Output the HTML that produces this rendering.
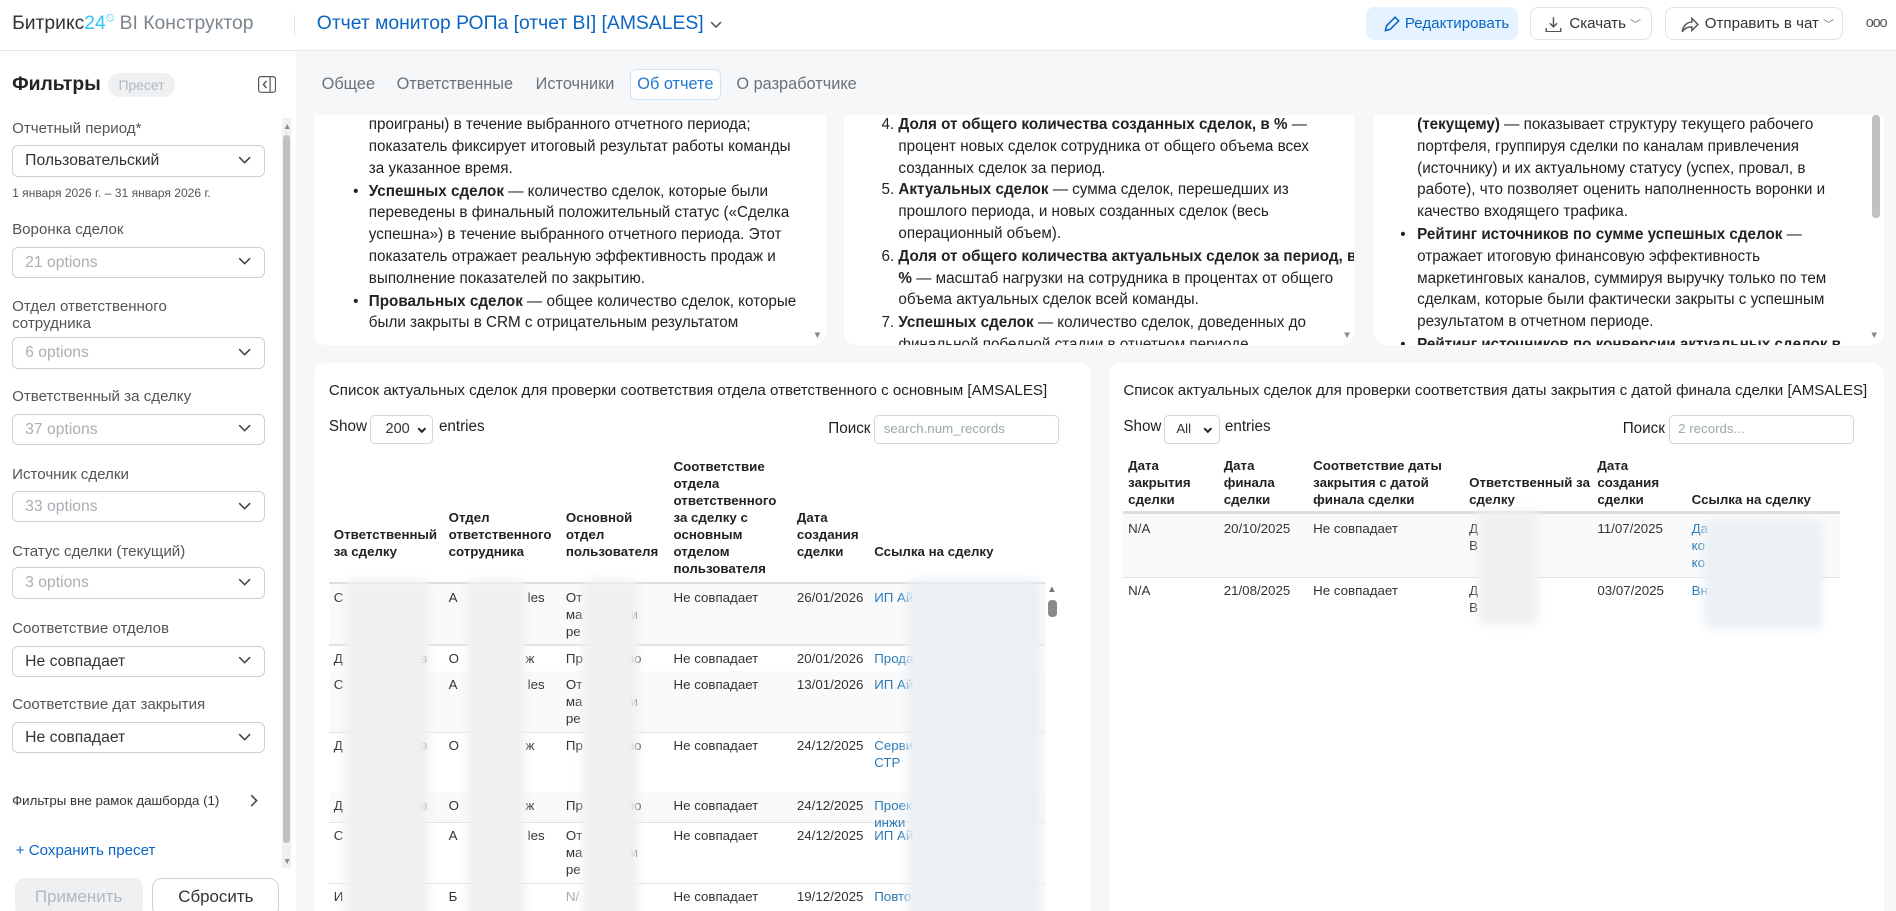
<!DOCTYPE html>
<html><head><meta charset="utf-8"><style>
html,body{margin:0;padding:0;overflow:hidden;background:#f5f7f8}
#r{position:relative;width:1568px;height:753px;zoom:1.2092;font-family:"Liberation Sans",sans-serif;color:#333;font-size:13px;overflow:hidden;background:#f5f7f8}
.a{position:absolute;white-space:nowrap}
.hdr{position:absolute;left:0;top:0;width:1568px;height:41px;background:#fff;border-bottom:1px solid #e4e7ea}
.btn{position:absolute;top:6px;height:27px;border:1px solid #dfe3e6;border-radius:7px;background:#fff;font-size:12.5px;color:#333;line-height:27px;box-sizing:border-box}
.side{position:absolute;left:0;top:42px;width:245px;height:711px;background:#fff}
.lbl{position:absolute;left:10px;font-size:12.5px;color:#555}
.sel{position:absolute;left:10px;width:209px;height:26px;border:1px solid #ccd0d4;border-radius:5px;box-sizing:border-box;font-size:13px;line-height:24px;padding-left:10px;color:#333}
.sel.ph{color:#a9afb4}
.sel svg{position:absolute;right:10px;top:8px}
.card{position:absolute;background:#fff;border-radius:10px;overflow:hidden}
.t{position:absolute;white-space:nowrap;font-size:12.6px;color:#222}
.bl{position:absolute;filter:blur(4px);background:#eef0f2;border-radius:6px}
.h{position:absolute;font-size:11px;font-weight:bold;color:#222;line-height:14px;white-space:nowrap}
.c{position:absolute;font-size:11px;color:#333;line-height:14px;white-space:nowrap}
.lk{color:#2a7ab8}
.rl{position:absolute;height:1px;background:#e2e2e2}
</style></head><body><div id="r">

<div class="hdr">
 <div class="a" style="left:10px;top:10px;font-size:16px;color:#333">Битрикс<span style="color:#2fc6f6">24</span><sup style="font-size:9px;color:#2fc6f6">⏲</sup> <span style="color:#7c858c">BI Конструктор</span></div>
 <div class="a" style="left:243px;top:12px;width:1px;height:18px;background:#e4e7ea"></div>
 <div class="a" style="left:262px;top:10px;font-size:16px;color:#0b66c3">Отчет монитор РОПа [отчет BI] [AMSALES]</div>
 <svg class="a" style="left:587px;top:17px" width="10" height="7"><polyline points="1,1 5,5 9,1" fill="none" stroke="#555" stroke-width="1.3"/></svg>
 <div class="btn" style="left:1130px;width:125px;background:#e5f2ff;border-color:#e5f2ff;color:#0b66c3;padding-left:31px"><svg class="a" style="left:13px;top:6px" width="14" height="14"><path d="M2 12 L3 8 L10 1 L13 4 L6 11 Z" fill="none" stroke="#0b66c3" stroke-width="1.3"/></svg>Редактировать</div>
 <div class="btn" style="left:1265px;width:101px;padding-left:32px"><svg class="a" style="left:12px;top:6px" width="14" height="14"><path d="M7 1 V9 M4 6 L7 9 L10 6 M1 10 V13 H13 V10" fill="none" stroke="#555" stroke-width="1.2"/></svg>Скачать <span style="font-size:9px;color:#777">﹀</span></div>
 <div class="btn" style="left:1377px;width:147px;padding-left:32px"><svg class="a" style="left:12px;top:6px" width="15" height="14"><path d="M1 13 C2 7 6 5 9 5 V2 L14 7 L9 12 V9 C6 9 3 10 1 13 Z" fill="none" stroke="#555" stroke-width="1.2"/></svg>Отправить в чат <span style="font-size:9px;color:#777">﹀</span></div>
 <div class="a" style="left:1543px;top:12px;font-size:12px;color:#555;letter-spacing:-1px">ooo</div>
</div>

<div class="side">
 <div class="a" style="left:10px;top:18px;font-size:16px;font-weight:bold;color:#222">Фильтры</div>
 <div class="a" style="left:89px;top:18px;width:56px;height:20px;border-radius:10px;background:#eef0f2;color:#b3b9be;font-size:11.5px;text-align:center;line-height:20px">Пресет</div>
 <svg class="a" style="left:213px;top:21px" width="15" height="14"><rect x="0.5" y="0.5" width="14" height="13" rx="2" fill="none" stroke="#555"/><line x1="10" y1="1" x2="10" y2="13" stroke="#555"/><polyline points="7,4 4.5,7 7,10" fill="none" stroke="#555" stroke-width="1.2"/></svg>
 <div class="lbl" style="top:57px">Отчетный период*</div>
 <div class="sel" style="top:78px">Пользовательский<svg width="11" height="7"><polyline points="1,1 5.5,5.5 10,1" fill="none" stroke="#444" stroke-width="1.3"/></svg></div>
 <div class="a" style="left:10px;top:112px;font-size:10px;color:#555">1 января 2026 г. – 31 января 2026 г.</div>
 <div class="lbl" style="top:141px">Воронка сделок</div>
 <div class="sel ph" style="top:162px">21 options<svg width="11" height="7"><polyline points="1,1 5.5,5.5 10,1" fill="none" stroke="#444" stroke-width="1.3"/></svg></div>
 <div class="lbl" style="top:205px;line-height:14px">Отдел ответственного<br>сотрудника</div>
 <div class="sel ph" style="top:237px">6 options<svg width="11" height="7"><polyline points="1,1 5.5,5.5 10,1" fill="none" stroke="#444" stroke-width="1.3"/></svg></div>
 <div class="lbl" style="top:279px">Ответственный за сделку</div>
 <div class="sel ph" style="top:300px">37 options<svg width="11" height="7"><polyline points="1,1 5.5,5.5 10,1" fill="none" stroke="#444" stroke-width="1.3"/></svg></div>
 <div class="lbl" style="top:343px">Источник сделки</div>
 <div class="sel ph" style="top:364px">33 options<svg width="11" height="7"><polyline points="1,1 5.5,5.5 10,1" fill="none" stroke="#444" stroke-width="1.3"/></svg></div>
 <div class="lbl" style="top:407px">Статус сделки (текущий)</div>
 <div class="sel ph" style="top:427px">3 options<svg width="11" height="7"><polyline points="1,1 5.5,5.5 10,1" fill="none" stroke="#444" stroke-width="1.3"/></svg></div>
 <div class="lbl" style="top:471px">Соответствие отделов</div>
 <div class="sel" style="top:492px">Не совпадает<svg width="11" height="7"><polyline points="1,1 5.5,5.5 10,1" fill="none" stroke="#444" stroke-width="1.3"/></svg></div>
 <div class="lbl" style="top:534px">Соответствие дат закрытия</div>
 <div class="sel" style="top:555px">Не совпадает<svg width="11" height="7"><polyline points="1,1 5.5,5.5 10,1" fill="none" stroke="#444" stroke-width="1.3"/></svg></div>
 <div class="a" style="left:10px;top:614px;font-size:11px;color:#333">Фильтры вне рамок дашборда (1)</div>
 <svg class="a" style="left:207px;top:615px" width="7" height="11"><polyline points="1,1 5.5,5.5 1,10" fill="none" stroke="#444" stroke-width="1.3"/></svg>
 <div class="a" style="left:13px;top:654px;font-size:12.5px;color:#0b66c3">+ Сохранить пресет</div>
 <div class="a" style="left:12px;top:684px;width:106px;height:32px;border-radius:8px;background:#eef0f2;color:#b3b9be;font-size:14px;text-align:center;line-height:32px">Применить</div>
 <div class="a" style="left:126px;top:684px;width:105px;height:32px;border-radius:8px;border:1px solid #ccd0d4;box-sizing:border-box;color:#333;font-size:14px;text-align:center;line-height:30px">Сбросить</div>
 <div class="a" style="left:233px;top:56px;width:8px;height:620px;background:#f1f1f1"></div>
 <div class="a" style="left:234px;top:70px;width:6px;height:585px;background:#c1c1c1;border-radius:3px"></div>
 <div class="a" style="left:234px;top:58px;font-size:7px;color:#888">▲</div>
 <div class="a" style="left:234px;top:666px;font-size:7px;color:#888">▼</div>
</div>

<!-- tabs -->
<div class="a" style="left:266px;top:62px;font-size:13.5px;color:#6b7379">Общее</div>
<div class="a" style="left:328px;top:62px;font-size:13.5px;color:#6b7379">Ответственные</div>
<div class="a" style="left:443px;top:62px;font-size:13.5px;color:#6b7379">Источники</div>
<div class="a" style="left:521px;top:57px;width:75px;height:26px;border:1px solid #cfe3f7;border-radius:5px;background:#fff;box-sizing:border-box;font-size:13.5px;color:#1f77d0;text-align:center;line-height:24px">Об отчете</div>
<div class="a" style="left:609px;top:62px;font-size:13.5px;color:#6b7379">О разработчике</div>

<!-- top cards -->
<div class="card" style="left:260px;top:95px;width:423px;height:190px;border-radius:0 0 10px 10px">
 <div class="t" style="left:45px;top:-17px">перешли в финальный статус (успешно реализованы или</div>
 <div class="t" style="left:45px;top:1px">проиграны) в течение выбранного отчетного периода;</div>
 <div class="t" style="left:45px;top:19px">показатель фиксирует итоговый результат работы команды</div>
 <div class="t" style="left:45px;top:37px">за указанное время.</div>
 <div class="t" style="left:32px;top:56px">•</div>
 <div class="t" style="left:45px;top:56px"><b>Успешных сделок</b> — количество сделок, которые были</div>
 <div class="t" style="left:45px;top:74px">переведены в финальный положительный статус («Сделка</div>
 <div class="t" style="left:45px;top:92px">успешна») в течение выбранного отчетного периода. Этот</div>
 <div class="t" style="left:45px;top:110px">показатель отражает реальную эффективность продаж и</div>
 <div class="t" style="left:45px;top:128px">выполнение показателей по закрытию.</div>
 <div class="t" style="left:32px;top:147px">•</div>
 <div class="t" style="left:45px;top:147px"><b>Провальных сделок</b> — общее количество сделок, которые</div>
 <div class="t" style="left:45px;top:165px">были закрыты в CRM с отрицательным результатом</div>
 <div class="a" style="left:412px;top:178px;font-size:8px;color:#888">▼</div>
</div>
<div class="card" style="left:698px;top:95px;width:422px;height:190px;border-radius:0 0 10px 10px">
 <div class="t" style="left:31px;top:1px">4. <b>Доля от общего количества созданных сделок, в %</b> —</div>
 <div class="t" style="left:45px;top:19px">процент новых сделок сотрудника от общего объема всех</div>
 <div class="t" style="left:45px;top:37px">созданных сделок за период.</div>
 <div class="t" style="left:31px;top:55px">5. <b>Актуальных сделок</b> — сумма сделок, перешедших из</div>
 <div class="t" style="left:45px;top:73px">прошлого периода, и новых созданных сделок (весь</div>
 <div class="t" style="left:45px;top:91px">операционный объем).</div>
 <div class="t" style="left:31px;top:110px">6. <b>Доля от общего количества актуальных сделок за период, в</b></div>
 <div class="t" style="left:45px;top:128px"><b>%</b> — масштаб нагрузки на сотрудника в процентах от общего</div>
 <div class="t" style="left:45px;top:146px">объема актуальных сделок всей команды.</div>
 <div class="t" style="left:31px;top:165px">7. <b>Успешных сделок</b> — количество сделок, доведенных до</div>
 <div class="t" style="left:45px;top:183px">финальной победной стадии в отчетном периоде</div>
 <div class="a" style="left:412px;top:178px;font-size:8px;color:#888">▼</div>
</div>
<div class="card" style="left:1136px;top:95px;width:422px;height:190px;border-radius:0 0 10px 10px">
 <div class="t" style="left:36px;top:1px"><b>(текущему)</b> — показывает структуру текущего рабочего</div>
 <div class="t" style="left:36px;top:19px">портфеля, группируя сделки по каналам привлечения</div>
 <div class="t" style="left:36px;top:37px">(источнику) и их актуальному статусу (успех, провал, в</div>
 <div class="t" style="left:36px;top:55px">работе), что позволяет оценить наполненность воронки и</div>
 <div class="t" style="left:36px;top:73px">качество входящего трафика.</div>
 <div class="t" style="left:22px;top:92px">•</div>
 <div class="t" style="left:36px;top:92px"><b>Рейтинг источников по сумме успешных сделок</b> —</div>
 <div class="t" style="left:36px;top:110px">отражает итоговую финансовую эффективность</div>
 <div class="t" style="left:36px;top:128px">маркетинговых каналов, суммируя выручку только по тем</div>
 <div class="t" style="left:36px;top:146px">сделкам, которые были фактически закрыты с успешным</div>
 <div class="t" style="left:36px;top:164px">результатом в отчетном периоде.</div>
 <div class="t" style="left:22px;top:183px">•</div>
 <div class="t" style="left:36px;top:183px"><b>Рейтинг источников по конверсии актуальных сделок в</b></div>
 <div class="a" style="left:412px;top:0px;width:7px;height:85px;background:#c1c1c1;border-radius:3px"></div>
 <div class="a" style="left:410px;top:178px;font-size:8px;color:#888">▼</div>
</div>

<!-- bottom left card -->
<div class="card" style="left:260px;top:300px;width:642px;height:470px">
 <div class="t" style="left:12px;top:16px;font-size:12.5px">Список актуальных сделок для проверки соответствия отдела ответственного с основным [AMSALES]</div>
 <div class="t" style="left:12px;top:46px">Show</div>
 <div class="a" style="left:46px;top:43px;width:52px;height:24px;border:1px solid #d6d6d6;border-radius:4px;box-sizing:border-box;font-size:12px;line-height:22px;padding-left:12px">200<svg class="a" style="left:38px;top:9px" width="8" height="6"><polyline points="1,1 4,4 7,1" fill="none" stroke="#222" stroke-width="1.6"/></svg></div>
 <div class="t" style="left:103px;top:46px">entries</div>
 <div class="t" style="left:425px;top:47px">Поиск</div>
 <div class="a" style="left:463px;top:43px;width:153px;height:24px;border:1px solid #d6d6d6;border-radius:4px;box-sizing:border-box;font-size:11px;line-height:22px;padding-left:7px;color:#9aa">search.num_records</div>
 <div class="h" style="left:16px;top:136px">Ответственный<br>за сделку</div>
 <div class="h" style="left:111px;top:122px">Отдел<br>ответственного<br>сотрудника</div>
 <div class="h" style="left:208px;top:122px">Основной<br>отдел<br>пользователя</div>
 <div class="h" style="left:297px;top:80px">Соответствие<br>отдела<br>ответственного<br>за сделку с<br>основным<br>отделом<br>пользователя</div>
 <div class="h" style="left:399px;top:122px">Дата<br>создания<br>сделки</div>
 <div class="h" style="left:463px;top:150px">Ссылка на сделку</div>
 <div class="a" style="left:12px;top:181px;width:592px;height:2px;background:#ddd"></div>
 <div class="a" style="left:12px;top:183px;width:592px;height:50px;background:#fafafa"></div>
 <div class="rl" style="left:12px;top:233px;width:592px"></div>
 <div class="rl" style="left:12px;top:255px;width:592px"></div>
 <div class="a" style="left:12px;top:255px;width:592px;height:50px;background:#fafafa"></div>
 <div class="rl" style="left:12px;top:305px;width:592px"></div>
 <div class="rl" style="left:12px;top:355px;width:592px"></div>
 <div class="a" style="left:12px;top:355px;width:592px;height:25px;background:#fafafa"></div>
 <div class="rl" style="left:12px;top:380px;width:592px"></div>
 <div class="rl" style="left:12px;top:430px;width:592px"></div>
 <div class="c" style="left:16px;top:188px">С</div><div class="c" style="left:111px;top:188px">А&nbsp;&nbsp;&nbsp;&nbsp;&nbsp;&nbsp;&nbsp;&nbsp;&nbsp;&nbsp;&nbsp;&nbsp;&nbsp;&nbsp;&nbsp;&nbsp;&nbsp;&nbsp;&nbsp;les</div><div class="c" style="left:208px;top:188px">От<br>ма&nbsp;&nbsp;&nbsp;&nbsp;&nbsp;&nbsp;&nbsp;&nbsp;&nbsp;&nbsp;&nbsp;&nbsp;&nbsp;и<br>ре</div><div class="c" style="left:297px;top:188px">Не совпадает</div><div class="c" style="left:399px;top:188px">26/01/2026</div><div class="c lk" style="left:463px;top:188px">ИП Ай</div>
 <div class="c" style="left:16px;top:238px">Д&nbsp;&nbsp;&nbsp;&nbsp;&nbsp;&nbsp;&nbsp;&nbsp;&nbsp;&nbsp;&nbsp;&nbsp;&nbsp;&nbsp;&nbsp;&nbsp;&nbsp;&nbsp;&nbsp;ов</div><div class="c" style="left:111px;top:238px">О&nbsp;&nbsp;&nbsp;&nbsp;&nbsp;&nbsp;&nbsp;&nbsp;&nbsp;&nbsp;&nbsp;&nbsp;&nbsp;&nbsp;&nbsp;&nbsp;&nbsp;&nbsp;ж</div><div class="c" style="left:208px;top:238px">Пр&nbsp;&nbsp;&nbsp;&nbsp;&nbsp;&nbsp;&nbsp;&nbsp;&nbsp;&nbsp;&nbsp;&nbsp;во</div><div class="c" style="left:297px;top:238px">Не совпадает</div><div class="c" style="left:399px;top:238px">20/01/2026</div><div class="c lk" style="left:463px;top:238px">Прода</div>
 <div class="c" style="left:16px;top:260px">С</div><div class="c" style="left:111px;top:260px">А&nbsp;&nbsp;&nbsp;&nbsp;&nbsp;&nbsp;&nbsp;&nbsp;&nbsp;&nbsp;&nbsp;&nbsp;&nbsp;&nbsp;&nbsp;&nbsp;&nbsp;&nbsp;&nbsp;les</div><div class="c" style="left:208px;top:260px">От<br>ма&nbsp;&nbsp;&nbsp;&nbsp;&nbsp;&nbsp;&nbsp;&nbsp;&nbsp;&nbsp;&nbsp;&nbsp;&nbsp;и<br>ре</div><div class="c" style="left:297px;top:260px">Не совпадает</div><div class="c" style="left:399px;top:260px">13/01/2026</div><div class="c lk" style="left:463px;top:260px">ИП Ай</div>
 <div class="c" style="left:16px;top:310px">Д&nbsp;&nbsp;&nbsp;&nbsp;&nbsp;&nbsp;&nbsp;&nbsp;&nbsp;&nbsp;&nbsp;&nbsp;&nbsp;&nbsp;&nbsp;&nbsp;&nbsp;&nbsp;&nbsp;ов</div><div class="c" style="left:111px;top:310px">О&nbsp;&nbsp;&nbsp;&nbsp;&nbsp;&nbsp;&nbsp;&nbsp;&nbsp;&nbsp;&nbsp;&nbsp;&nbsp;&nbsp;&nbsp;&nbsp;&nbsp;&nbsp;ж</div><div class="c" style="left:208px;top:310px">Пр&nbsp;&nbsp;&nbsp;&nbsp;&nbsp;&nbsp;&nbsp;&nbsp;&nbsp;&nbsp;&nbsp;&nbsp;во</div><div class="c" style="left:297px;top:310px">Не совпадает</div><div class="c" style="left:399px;top:310px">24/12/2025</div><div class="c lk" style="left:463px;top:310px">Серви<br>СТР</div>
 <div class="c" style="left:16px;top:360px">Д&nbsp;&nbsp;&nbsp;&nbsp;&nbsp;&nbsp;&nbsp;&nbsp;&nbsp;&nbsp;&nbsp;&nbsp;&nbsp;&nbsp;&nbsp;&nbsp;&nbsp;&nbsp;&nbsp;ов</div><div class="c" style="left:111px;top:360px">О&nbsp;&nbsp;&nbsp;&nbsp;&nbsp;&nbsp;&nbsp;&nbsp;&nbsp;&nbsp;&nbsp;&nbsp;&nbsp;&nbsp;&nbsp;&nbsp;&nbsp;&nbsp;ж</div><div class="c" style="left:208px;top:360px">Пр&nbsp;&nbsp;&nbsp;&nbsp;&nbsp;&nbsp;&nbsp;&nbsp;&nbsp;&nbsp;&nbsp;&nbsp;во</div><div class="c" style="left:297px;top:360px">Не совпадает</div><div class="c" style="left:399px;top:360px">24/12/2025</div><div class="c lk" style="left:463px;top:360px">Проек<br>инжи</div>
 <div class="c" style="left:16px;top:385px">С</div><div class="c" style="left:111px;top:385px">А&nbsp;&nbsp;&nbsp;&nbsp;&nbsp;&nbsp;&nbsp;&nbsp;&nbsp;&nbsp;&nbsp;&nbsp;&nbsp;&nbsp;&nbsp;&nbsp;&nbsp;&nbsp;&nbsp;les</div><div class="c" style="left:208px;top:385px">От<br>ма&nbsp;&nbsp;&nbsp;&nbsp;&nbsp;&nbsp;&nbsp;&nbsp;&nbsp;&nbsp;&nbsp;&nbsp;&nbsp;и<br>ре</div><div class="c" style="left:297px;top:385px">Не совпадает</div><div class="c" style="left:399px;top:385px">24/12/2025</div><div class="c lk" style="left:463px;top:385px">ИП Ай</div>
 <div class="c" style="left:16px;top:435px">И</div><div class="c" style="left:111px;top:435px">Б</div><div class="c" style="left:208px;top:435px;color:#aaa">N/</div><div class="c" style="left:297px;top:435px">Не совпадает</div><div class="c" style="left:399px;top:435px">19/12/2025</div><div class="c lk" style="left:463px;top:435px">Повто</div>
 <div class="bl" style="left:25px;top:180px;width:70px;height:300px"></div>
 <div class="bl" style="left:126px;top:180px;width:48px;height:300px"></div>
 <div class="bl" style="left:222px;top:180px;width:46px;height:300px"></div>
 <div class="bl" style="left:490px;top:180px;width:112px;height:300px;background:#eaf0f4"></div>
 <div class="a" style="left:606px;top:183px;width:9px;height:290px;background:#fff"></div>
 <div class="a" style="left:607px;top:196px;width:7px;height:14px;background:#8a8a8a;border-radius:3px"></div>
 <div class="a" style="left:606px;top:183px;font-size:8px;color:#777">▲</div>
</div>

<!-- bottom right card -->
<div class="card" style="left:917px;top:300px;width:641px;height:470px">
 <div class="t" style="left:12px;top:16px;font-size:12.5px">Список актуальных сделок для проверки соответствия даты закрытия с датой финала сделки [AMSALES]</div>
 <div class="t" style="left:12px;top:46px">Show</div>
 <div class="a" style="left:46px;top:43px;width:46px;height:24px;border:1px solid #d6d6d6;border-radius:4px;box-sizing:border-box;font-size:11px;line-height:22px;padding-left:9px">All<svg class="a" style="left:31px;top:9px" width="8" height="6"><polyline points="1,1 4,4 7,1" fill="none" stroke="#222" stroke-width="1.6"/></svg></div>
 <div class="t" style="left:96px;top:46px">entries</div>
 <div class="t" style="left:425px;top:47px">Поиск</div>
 <div class="a" style="left:463px;top:43px;width:153px;height:24px;border:1px solid #d6d6d6;border-radius:4px;box-sizing:border-box;font-size:11px;line-height:22px;padding-left:7px;color:#9aa">2 records...</div>
 <div class="h" style="left:16px;top:79px">Дата<br>закрытия<br>сделки</div>
 <div class="h" style="left:95px;top:79px">Дата<br>финала<br>сделки</div>
 <div class="h" style="left:169px;top:79px">Соответствие даты<br>закрытия с датой<br>финала сделки</div>
 <div class="h" style="left:298px;top:93px">Ответственный за<br>сделку</div>
 <div class="h" style="left:404px;top:79px">Дата<br>создания<br>сделки</div>
 <div class="h" style="left:482px;top:107px">Ссылка на сделку</div>
 <div class="a" style="left:12px;top:123px;width:593px;height:2px;background:#ddd"></div>
 <div class="a" style="left:12px;top:125px;width:593px;height:52px;background:#fafafa"></div>
 <div class="rl" style="left:12px;top:177px;width:593px"></div>
 <div class="c" style="left:16px;top:131px">N/A</div><div class="c" style="left:95px;top:131px">20/10/2025</div><div class="c" style="left:169px;top:131px">Не совпадает</div><div class="c" style="left:298px;top:131px">Д<br>В</div><div class="c" style="left:404px;top:131px">11/07/2025</div><div class="c lk" style="left:482px;top:131px">Да<br>ко<br>ко&nbsp;&nbsp;&nbsp;&nbsp;&nbsp;&nbsp;&nbsp;&nbsp;&nbsp;&nbsp;&nbsp;&nbsp;&nbsp;&nbsp;&nbsp;&nbsp;&nbsp;&nbsp;&nbsp;&nbsp;&nbsp;&nbsp;&nbsp;&nbsp;&nbsp;&nbsp;&nbsp;&nbsp;т</div>
 <div class="c" style="left:16px;top:182px">N/A</div><div class="c" style="left:95px;top:182px">21/08/2025</div><div class="c" style="left:169px;top:182px">Не совпадает</div><div class="c" style="left:298px;top:182px">Д<br>В</div><div class="c" style="left:404px;top:182px">03/07/2025</div><div class="c lk" style="left:482px;top:182px">Вн</div>
 <div class="bl" style="left:305px;top:122px;width:50px;height:95px"></div>
 <div class="bl" style="left:492px;top:130px;width:98px;height:90px;background:#eaf0f4"></div>
</div>

</div></body></html>
